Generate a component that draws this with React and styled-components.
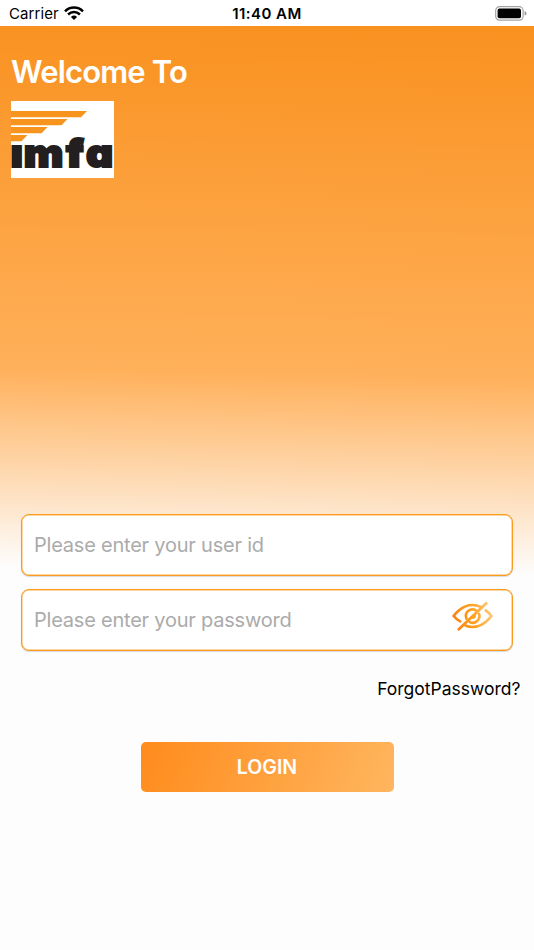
import React from "react";
import styled, { createGlobalStyle } from "styled-components";

const GlobalStyle = createGlobalStyle`
  * { box-sizing: border-box; }
  html, body { margin: 0; background: #fdfdfd; }
  body { font-family: Inter, "Liberation Sans", sans-serif; overflow: hidden; }
`;

const Screen = styled.div`
  width: 534px;
  height: 950px;
  display: flex;
  flex-direction: column;
  overflow: hidden;
  background: #fdfdfd;
`;

const StatusBar = styled.header`
  height: 26px;
  flex: none;
  display: grid;
  grid-template-columns: 1fr auto 1fr;
  align-items: center;
  padding: 2px 7px 0 9px;
  background: #fff;
  color: #000;
  font-size: 15px;
  line-height: 24px;
`;

const Carrier = styled.div`
  display: flex;
  align-items: center;
  gap: 5px;
  letter-spacing: 0.1px;

  svg { margin-bottom: 2px; }
`;

const Time = styled.div`
  margin-right: 2px;
  font-weight: 600;
  letter-spacing: 0.45px;
`;

const BatteryIcon = styled.svg`
  justify-self: end;
  margin-bottom: 2px;
`;

const Body = styled.main`
  flex: 1;
  display: flex;
  flex-direction: column;
  background: linear-gradient(181deg, #f9911f 0, #ffb05a 351px, #fdfdfd 550px);
`;

const Title = styled.h1`
  margin: 26px 0 0 11px;
  color: #fff;
  font-size: 31px;
  font-weight: 600;
  line-height: 40px;
  letter-spacing: -0.85px;
`;

const Logo = styled.svg`
  display: block;
  margin: 9px 0 0 10.5px;
`;

const Form = styled.form`
  margin: 336px 21px 0;
  display: flex;
  flex-direction: column;
  gap: 13px;
`;

const Field = styled.label`
  height: 62px;
  display: flex;
  align-items: center;
  padding: 0 19px 0 12px;
  border: 1px solid #fb9c1c;
  border-radius: 8px;
  background: #fff;
  box-shadow: inset 0 0 0 0.5px #fdb04c, 0 1px 1px rgba(80, 80, 110, 0.2);
`;

const Input = styled.input`
  flex: 1;
  min-width: 0;
  border: 0;
  padding: 0;
  outline: 0;
  background: transparent;
  font: 400 20px/28px Inter, sans-serif;
  letter-spacing: -0.22px;
  &::placeholder { color: #ababab; opacity: 1; }
`;

const EyeIcon = styled.svg`
  flex: none;
  margin-bottom: 8px;
`;

const Forgot = styled.a`
  align-self: flex-end;
  margin: 25px 13.5px 0 0;
  color: #000;
  font-size: 17.5px;
  line-height: 26px;
`;

const LoginButton = styled.button`
  align-self: center;
  width: 253px;
  height: 50px;
  margin: 40px 0 0;
  padding: 0;
  border: 0;
  border-radius: 5px;
  background: linear-gradient(110deg, #ff8b1c, #ffb65f);
  color: #fff;
  font: 600 19.5px/51px Inter, sans-serif;
`;

const Wifi = () => (
  <svg width="20" height="15" viewBox="0 0 20 15" fill="none" stroke="#000" strokeWidth="2.5">
    <path d="M1 5.3C6 .2 14 .2 19 5.3" />
    <path d="M4.1 8.5c3.3-3.2 8.5-3.2 11.8 0" />
    <path d="M6.9 11a4.6 4.6 0 0 1 6.2 0L10 14.1Z" fill="#000" stroke="none" />
  </svg>
);

const Battery = () => (
  <BatteryIcon width="32" height="15" viewBox="0 0 32 15">
    <rect x=".7" y=".7" width="27.4" height="13.4" rx="3.8" fill="none" stroke="#a2a2a2" strokeWidth="1.2" />
    <rect x="2.6" y="2.6" width="23.4" height="9.6" rx="1.8" />
    <path d="M29.6 5v4.6q1.8-.7 1.8-2.3T29.6 5" fill="#8e8e8e" />
  </BatteryIcon>
);

const LogoText = styled.text`
  fill: #231f20;
  stroke: #231f20;
  stroke-width: 2px;
  font: 900 38.5px Inter, sans-serif;
  font-feature-settings: "cv11";
`;

const Brand = () => (
  <Logo width="103" height="77" viewBox="0 0 103 77" role="img" aria-label="imfa">
    <rect width="103" height="77" fill="#fff" />
    <path fill="#f7941e" d="M0 10h76l-6 6.3H0zM0 18h56.5l-6 6.3H0zM0 26h36.5l-6 6.3H0zM0 34h16.5l-6 6.3H0z" />
    <LogoText x="-0.5 11.6 50.5 68.8" y="66.5" transform="scale(1.09 1)">ımfa</LogoText>
  </Logo>
);

const HiddenEye = () => (
  <EyeIcon width="41" height="30" viewBox="0 0 41 30" fill="none" stroke="url(#eye)" strokeWidth="2.7" strokeLinecap="round">
    <defs>
      <linearGradient id="eye" gradientUnits="userSpaceOnUse" x1="0" y1="20" x2="40" y2="10">
        <stop stopColor="#f87f12" />
        <stop offset=".5" stopColor="#fda01c" />
        <stop offset="1" stopColor="#ffc77c" />
      </linearGradient>
    </defs>
    <path d="M8.2 20.4C4 18 1.7 15 1.7 15S9 4 20.5 4c3.3 0 6.2.9 8.2 1.9" />
    <path d="M33.8 9.4C37.2 11.8 39.3 15 39.3 15S32 26 20.5 26c-2.6 0-5-.5-7-1.4" />
    <path d="M6.8 28.3 34.3 2.3" />
    <path d="M14.4 17.6a6.7 6.7 0 0 1 9.4-8.4M27 12.8a6.7 6.7 0 0 1-9.2 8.3M22.8 14.8a2.6 2.6 0 0 1-2 1.9" />
  </EyeIcon>
);

export default function App() {
  return (
    <Screen>
      <GlobalStyle />
      <StatusBar>
        <Carrier>Carrier<Wifi /></Carrier>
        <Time>11:40 AM</Time>
        <Battery />
      </StatusBar>
      <Body>
        <Title>Welcome To</Title>
        <Brand />
        <Form>
          <Field><Input placeholder="Please enter your user id" /></Field>
          <Field><Input type="password" placeholder="Please enter your password" /><HiddenEye /></Field>
        </Form>
        <Forgot>ForgotPassword?</Forgot>
        <LoginButton>LOGIN</LoginButton>
      </Body>
    </Screen>
  );
}
